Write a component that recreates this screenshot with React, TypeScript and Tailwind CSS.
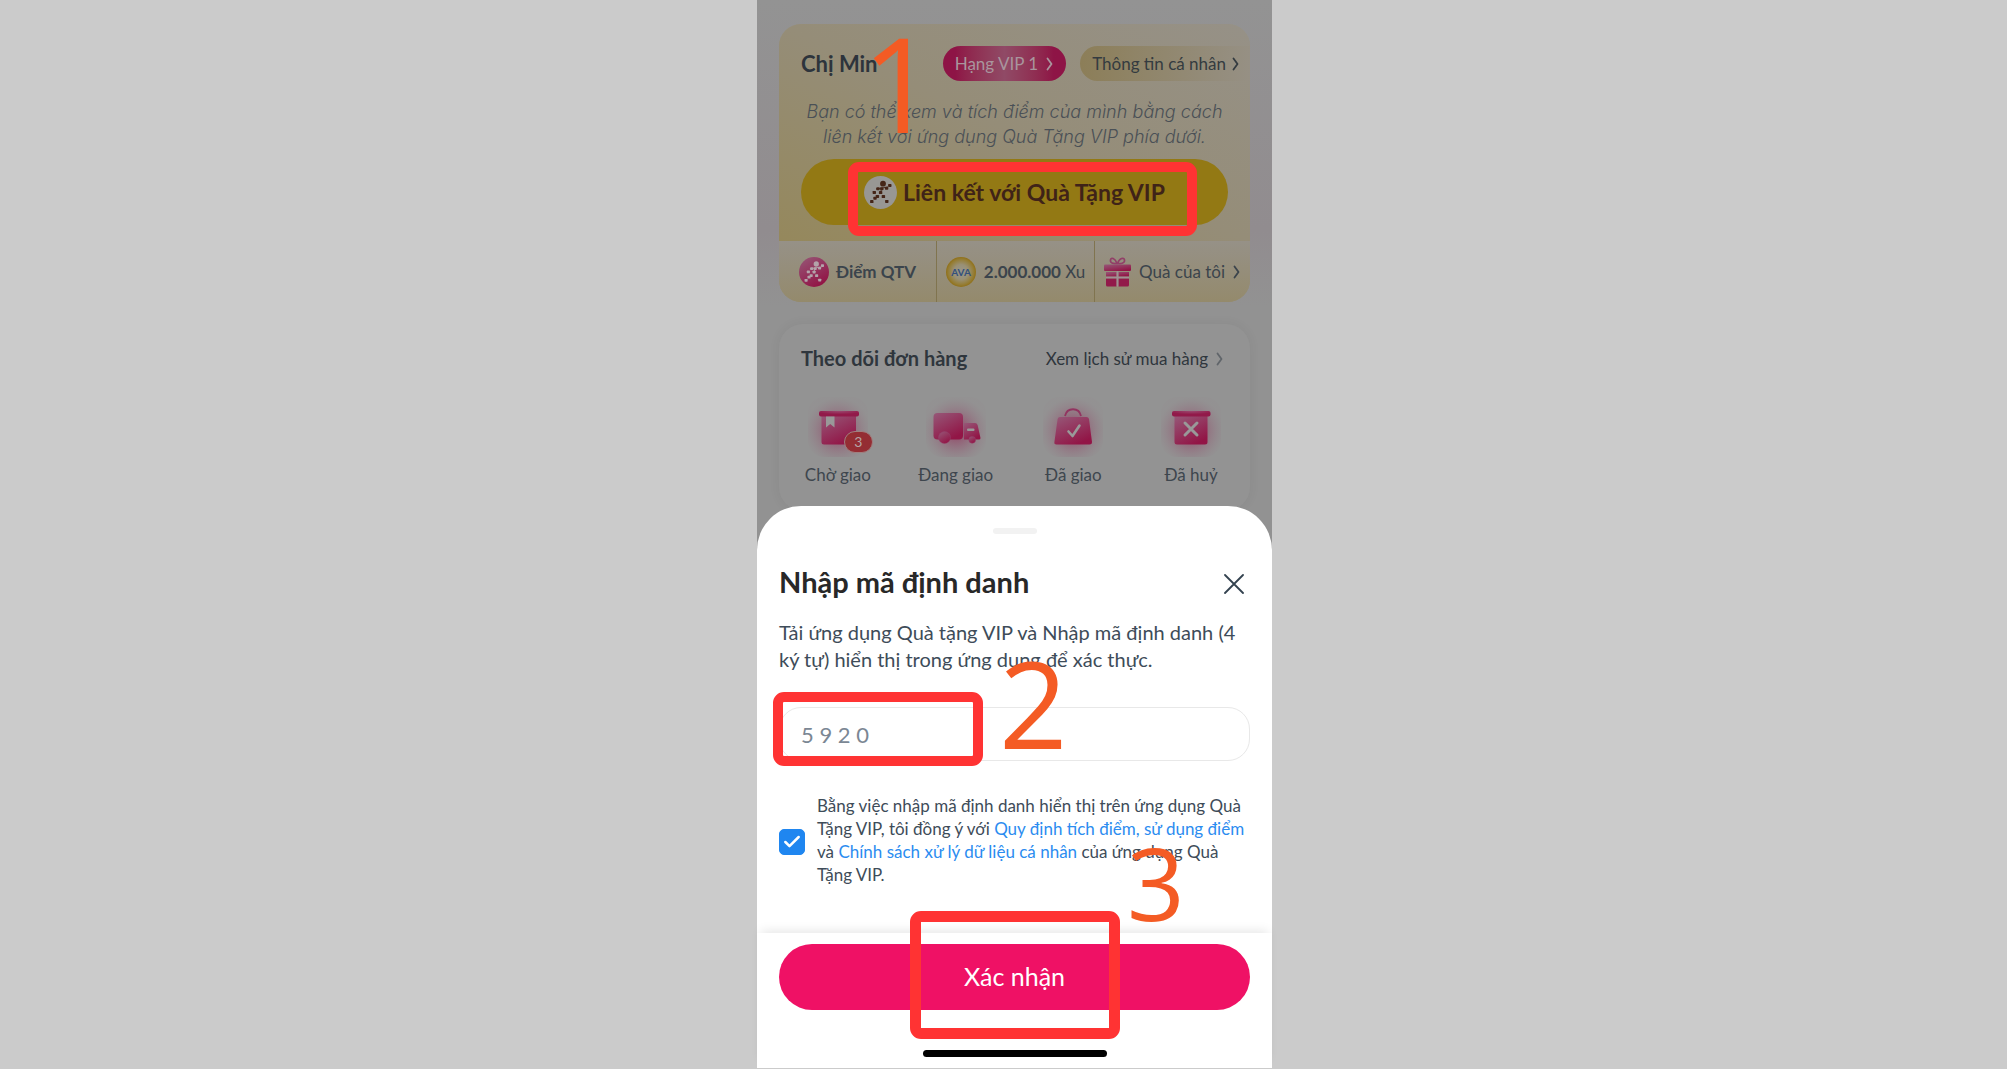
import React from 'react';
import { Check } from 'lucide-react';

function Chevron({ className }: { className: string }) {
  return (
    <svg viewBox="0 0 8 14" fill="none" stroke="currentColor" className={className} aria-hidden="true">
      <path d="M1.5 1.5 L5.5 7 L1.5 12.5" strokeWidth="1.8" strokeLinecap="round" strokeLinejoin="round" />
    </svg>
  );
}

// Running figure made of small tiles
const tiles = [
  [25.8, 9.5], [22.6, 12.2], [14, 12.8], [17.8, 12.8], [10.3, 16.4], [16.6, 16.6],
  [13.4, 20.4], [19.4, 20.6], [11, 22.2], [7.8, 25.6], [22.8, 25.4]
];

function Runner({ color }: { color: string }) {
  return (
    <g fill={color}>
      <circle cx="19" cy="7.7" r="2.9" />
      {tiles.map(([x, y]) => (
        <rect key={`${x}-${y}`} x={x - 1.7} y={y - 1.5} width="3.4" height="3" rx="0.7" />
      ))}
      <path d="M12 13 L24 11 M17.800 13 L16 17" stroke={color} strokeWidth="0.9" />
    </g>
  );
}

function Gradients() {
  return (
    <svg className="absolute size-0" aria-hidden="true">
      <defs>
        <linearGradient id="pink" x1="0" y1="0" x2="0.6" y2="1">
          <stop offset="0" stopColor="#965878" />
          <stop offset="1" stopColor="#921546" />
        </linearGradient>
        <radialGradient id="lid" cx="0.5" cy="0" r="0.6">
          <stop offset="0" stopColor="#9a4a70" />
          <stop offset="1" stopColor="#921a4a" />
        </radialGradient>
        <radialGradient id="glow" cx="0.5" cy="0.56" r="0.55">
          <stop offset="0" stopColor="#921f50" stopOpacity="0.75" />
          <stop offset="0.5" stopColor="#923860" stopOpacity="0.35" />
          <stop offset="1" stopColor="#926a7c" stopOpacity="0.04" />
        </radialGradient>
        <radialGradient id="coin">
          <stop offset="0" stopColor="#99978c" />
          <stop offset="0.5" stopColor="#999075" />
          <stop offset="0.85" stopColor="#957d34" />
          <stop offset="1" stopColor="#907018" />
        </radialGradient>
      </defs>
    </svg>
  );
}

function OrderIcon({ children }: { children: React.ReactNode }) {
  return (
    <svg viewBox="0 0 60 60" className="size-[60px]" aria-hidden="true">
      <rect width="60" height="60" rx="16" fill="url(#glow)" />
      {children}
    </svg>
  );
}

const orders = [
  {
    label: 'Chờ giao',
    badge: 3,
    icon: (
      <OrderIcon>
        <path d="M13.5 19 H48 V45 Q48 47.500 45.500 47.500 H16 Q13.500 47.500 13.500 45 Z" fill="url(#pink)" />
        <rect x="11" y="14" width="40" height="5.500" rx="2" fill="url(#lid)" />
        <path d="M18 19.500 H26.500 V30.500 L22.200 27 L18 30.500 Z" fill="#999" />
      </OrderIcon>
    )
  },
  {
    label: 'Đang giao',
    icon: (
      <OrderIcon>
        <rect x="7.500" y="16" width="29.500" height="26.500" rx="4" fill="url(#pink)" />
        <path d="M38 26 H49 Q51 26 51.600 28 L54.500 41 Q54.500 42.500 53 42.500 H38 Z" fill="url(#pink)" />
        <rect x="41" y="31.500" width="7.500" height="2.600" rx="1" fill="#999" />
        <circle cx="18.500" cy="40.500" r="6" fill="url(#pink)" stroke="#93416a" strokeWidth="0.500" />
        <circle cx="46.200" cy="42.800" r="3.400" fill="url(#pink)" stroke="#93416a" strokeWidth="0.500" />
      </OrderIcon>
    )
  },
  {
    label: 'Đã giao',
    icon: (
      <OrderIcon>
        <path d="M22 19 C24 10 36 10 38 19" fill="none" stroke="#923460" strokeWidth="1.800" />
        <path d="M17 20 H43.500 Q45.500 20 46 22 L49 45 Q49 47.500 46.500 47.500 H13.500 Q11 47.500 11.400 45 L14.600 22 Q15 20 17 20 Z" fill="url(#pink)" />
        <path d="M25.500 34.500 L29.500 39 L36.500 28.500" fill="none" stroke="#999" strokeWidth="2.600" strokeLinecap="round" strokeLinejoin="round" />
      </OrderIcon>
    )
  },
  {
    label: 'Đã huỷ',
    icon: (
      <OrderIcon>
        <path d="M13.500 19 H46.500 V45 Q46.500 47.500 44 47.500 H16 Q13.500 47.500 13.500 45 Z" fill="url(#pink)" />
        <rect x="11" y="14" width="38.500" height="5.500" rx="2" fill="url(#lid)" />
        <path d="M24 26 L36 38 M36 26 L24 38" stroke="#999" strokeWidth="3" strokeLinecap="round" />
      </OrderIcon>
    )
  }
];

export default function App() {
  return (
    <div className="min-h-screen bg-[#cbcbcb] flex items-start justify-center pl-[22px] font-['Lato','Open_Sans',sans-serif]">
      <Gradients />
      <main className="relative w-full max-w-[515px] bg-[#929292]">

        {/* Dimmed account screen */}
        <div className="px-[22px] pt-6 bg-linear-to-b from-[#939393] via-[#918c8f] via-45% to-[#929292] to-60%">
          <section className="rounded-[22px] overflow-hidden bg-linear-to-b from-[#969185] via-[#969081] via-80% to-[#948a6a]">
            <div className="bg-linear-to-tr from-[#95885c] via-[#958d78] to-[#969187] pt-[22px] pb-4">
              <div className="flex items-center pl-[22px]">
                <h2 className="text-[22px] leading-[35px] font-bold text-[#2d343c]">Chị Min</h2>
                <button className="ml-auto h-[35px] px-3 rounded-full bg-linear-to-r from-[#8e1446] from-10% via-[#904a66] to-[#8e1446] to-90% text-[#a9959d] text-[17px] flex items-center gap-2">
                  Hạng VIP 1
                  <Chevron className="w-2 h-[14px]" />
                </button>
                <button className="ml-3.5 h-[35px] pl-3 pr-2.5 rounded-l-full bg-linear-to-r from-[#8c7e58] to-[#969084] text-[#343b40] text-[17px] flex items-center gap-1.5">
                  Thông tin cá nhân
                  <Chevron className="w-2 h-[14px]" />
                </button>
              </div>

              <p className="mt-[18px] px-[22px] text-center font-['Inter',sans-serif] italic font-light text-[18px] leading-[25px] text-[#4a5056]">
                Bạn có thể xem và tích điểm của mình bằng cách liên kết với ứng dụng Quà Tặng VIP phía dưới.
              </p>

              <div className="relative mt-2.5 mx-[22px]">
                <button className="w-full h-[66px] rounded-full bg-[#937914] flex items-center justify-center gap-1.5 text-[23px] font-bold text-[#3f2318]">
                  <svg viewBox="0 0 33 33" className="size-[33px]" aria-hidden="true">
                    <circle cx="16.500" cy="16.500" r="16.500" fill="#989794" />
                    <Runner color="#452618" />
                  </svg>
                  <span>Liên kết với Quà Tặng VIP</span>
                </button>
                <div className="absolute top-[3px] left-[47px] right-[31px] h-[74px] border-10 border-[#ff3333] rounded-[11px] pointer-events-none"></div>
              </div>
            </div>

            <div className="h-[61px] grid grid-cols-[158fr_158fr_155fr] text-[17px] text-[#3b444c] bg-linear-to-b from-[#969187] to-[#948a6c]">
              <div className="flex items-center justify-center gap-[7px] border-r border-[#80744f] font-bold">
                <svg viewBox="0 0 33 33" className="size-[30px]" aria-hidden="true">
                  <circle cx="16.500" cy="16.500" r="16.500" fill="url(#pink)" />
                  <Runner color="#b3a3aa" />
                </svg>
                Điểm QTV
              </div>
              <div className="flex items-center justify-center gap-2 border-r border-[#80744f]">
                <svg viewBox="0 0 30 30" className="size-[30px]" aria-hidden="true">
                  <circle cx="15" cy="15" r="15" fill="url(#coin)" />
                  <text x="15" y="18.500" textAnchor="middle" fontSize="10" fontWeight="700" fill="#34507c">AVA</text>
                </svg>
                <span><b>2.000.000</b> Xu</span>
              </div>
              <a href="#gifts" className="flex items-center justify-center gap-2">
                <svg viewBox="0 0 27 30" className="w-[27px] h-[30px]" aria-hidden="true">
                  <g fill="none" stroke="#923f68" strokeWidth="1.700">
                    <path d="M13 6.500 C11 1 7 0 6.500 3 C6 6 9 7 13 6.500 Z" />
                    <path d="M13.500 6.500 C15.500 1 20 0 20.500 3 C21 6 17.500 7 13.500 6.500 Z" />
                  </g>
                  <rect x="0" y="7.500" width="27" height="6.500" rx="1" fill="url(#pink)" />
                  <path d="M2 15 H12.500 V19.500 H2 Z M14.500 15 H25 V19.500 H14.500 Z" fill="url(#pink)" />
                  <path d="M2 21.500 H12.500 V29.500 H3.500 Q2 29.500 2 28 Z M14.500 21.500 H25 V28 Q25 29.500 23.500 29.500 H14.500 Z" fill="#921a4a" />
                  <path d="M2 20.500 H25 M13.500 14 V29.500" stroke="#a08f96" strokeWidth="1.600" />
                </svg>
                Quà của tôi
                <Chevron className="w-2 h-[14px]" />
              </a>
            </div>
          </section>

          <section className="mt-[22px] pt-[19px] pb-6 rounded-3xl bg-[#939393] shadow-[0_0_12px_rgba(0,0,0,0.06)]">
            <div className="flex items-center justify-between px-[22px] text-[#2f363d]">
              <h2 className="text-[20px] leading-7 font-bold">Theo dõi đơn hàng</h2>
              <a href="#history" className="flex items-center gap-2 pt-0.5 pr-1 text-[17px] leading-7">
                Xem lịch sử mua hàng
                <Chevron className="w-2 h-[14px] text-[#60656a]" />
              </a>
            </div>
            <div className="grid grid-cols-4 mt-6">
              {orders.map(item => (
                <a key={item.label} href="#orders" className="flex flex-col items-center gap-1.5 text-[17px] leading-6 text-[#3e464e]">
                  <div className="relative">
                    {item.icon}
                    {item.badge && (
                      <span className="absolute top-[34px] left-[36px] w-[29px] h-[22px] rounded-full bg-[#942d33] border border-[#a08080] text-[#b4a4a5] text-sm leading-5 text-center">
                        {item.badge}
                      </span>
                    )}
                  </div>
                  {item.label}
                </a>
              ))}
            </div>
          </section>
        </div>

        {/* Bottom sheet */}
        <form className="relative -mt-[5px] pt-[22px] rounded-t-[44px] bg-white" onSubmit={e => e.preventDefault()}>
          <div className="w-11 h-1.5 mx-auto rounded-full bg-[#f2f2f2]"></div>

          <div className="px-[22px]">
            <div className="mt-[30px] flex items-center justify-between pr-1.5">
              <h1 className="text-[29px] leading-9 font-bold text-[#282828]">Nhập mã định danh</h1>
              <button type="button" aria-label="Đóng" className="mt-1">
                <svg viewBox="0 0 20 20" className="size-5" stroke="#33424f" strokeWidth="1.800" strokeLinecap="round">
                  <path d="M1 1 L19 19 M19 1 L1 19" />
                </svg>
              </button>
            </div>
            <label htmlFor="code" className="block mt-[19px] text-[20px] leading-[27px] text-[#3e4c59]">
              Tải ứng dụng Quà tặng VIP và Nhập mã định danh (4 ký tự) hiển thị trong ứng dụng để xác thực.
            </label>

            <div className="relative mt-[34px]">
              <input
                id="code"
                type="text"
                defaultValue="5 9 2 0"
                className="block w-full h-[54px] px-[21px] rounded-[22px] border border-[#e8e8e8] bg-white text-[22px] text-[#7b8794] outline-none"
              />
              <div className="absolute -top-[15px] -left-1.5 w-[210px] h-[74px] border-10 border-[#ff3333] rounded-[11px] pointer-events-none"></div>
            </div>

            <div className="mt-[33px] flex items-center gap-3">
              <span className="mt-1 grid shrink-0 size-[26px] *:[grid-area:1/1]">
                <input id="agree" type="checkbox" defaultChecked className="appearance-none size-[26px] rounded-[5px] border border-[#1f86f0] checked:bg-[#1f86f0]" />
                <Check className="size-5 m-[3px] text-white pointer-events-none" strokeWidth={3} />
              </span>
              <label htmlFor="agree" className="text-[17px] leading-[23px] text-[#3e4c59]">
                Bằng việc nhập mã định danh hiển thị trên ứng dụng Quà Tặng VIP, tôi đồng ý với{' '}
                <a href="#rules" className="text-[#2b8cf0]">Quy định tích điểm, sử dụng điểm</a> và{' '}
                <a href="#privacy" className="text-[#2b8cf0]">Chính sách xử lý dữ liệu cá nhân</a> của ứng dụng Quà Tặng VIP.
              </label>
            </div>
          </div>

          <div className="mt-[47px] pt-[11px] pb-[11px] px-[22px] bg-white shadow-[0_-6px_10px_-4px_rgba(0,0,0,0.1)]">
            <div className="relative">
              <button type="submit" className="w-full h-[66px] rounded-full bg-[#ef1165] text-white text-[25px]">
                Xác nhận
              </button>
              <div className="absolute -top-[33px] left-[131px] w-[210px] h-[128px] border-[11px] border-[#ff3333] rounded-[11px] pointer-events-none"></div>
            </div>
            <div className="w-[184px] h-[7px] mt-10 mx-auto rounded-full bg-black"></div>
          </div>
        </form>

        {/* Step numbers drawn over the screen */}
        <div className="font-['Open_Sans',sans-serif] leading-none text-[#f45b24] pointer-events-none">
          <span className="absolute top-[17px] left-[105px] text-[131px] leading-none">1</span>
          <span className="absolute top-[643px] left-[242px] text-[120px] leading-none">2</span>
          <span className="absolute top-[832px] left-[370px] text-[101px] leading-none">3</span>
        </div>
      </main>
    </div>
  );
}
